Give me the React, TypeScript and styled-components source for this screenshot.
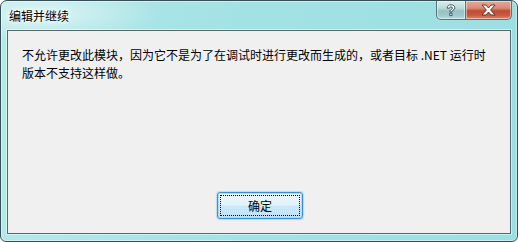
import React from 'react';
import styled, { createGlobalStyle } from 'styled-components';

const GlobalStyle = createGlobalStyle`
  html, body {
    margin: 0;
    padding: 0;
    background: #ffffff;
  }
  body {
    font-family: "Noto Sans CJK SC", "Microsoft YaHei", sans-serif;
  }
`;

const Window = styled.div`
  width: 518px;
  height: 242px;
  box-sizing: border-box;
  border: 1px solid #33505a;
  border-radius: 7px 7px 6px 6px;
  background:
    radial-gradient(ellipse 120px 30px at 40px 12px, rgba(255, 255, 255, 0.55), rgba(255, 255, 255, 0) 100%),
    linear-gradient(90deg, #b4e8e9 0%, #a3e2e4 45%, #9cdfe2 100%);
  box-shadow: inset 0 0 0 1px rgba(255, 255, 255, 0.45);
  display: flex;
  flex-direction: column;
  overflow: hidden;
`;

const TitleBar = styled.div`
  height: 29px;
  display: flex;
  justify-content: space-between;
  align-items: flex-start;
  flex-shrink: 0;
`;

const Title = styled.div`
  padding: 8px 0 0 8px;
  font-size: 12px;
  line-height: 14px;
  color: #000;
  text-shadow: 0 0 6px #ffffff, 0 0 4px #ffffff, 0 0 2px #ffffff;
`;

const CaptionButtons = styled.div`
  display: flex;
  margin-right: 5px;
`;

const CaptionButton = styled.div<{ $variant: 'help' | 'close' }>`
  width: ${({ $variant }) => ($variant === 'close' ? '46px' : '30px')};
  height: 19px;
  box-sizing: border-box;
  display: flex;
  align-items: center;
  justify-content: center;
  border: 1px solid #5a7478;
  border-top: none;
  border-left: ${({ $variant }) => ($variant === 'close' ? 'none' : '1px solid #5a7478')};
  border-radius: ${({ $variant }) => ($variant === 'close' ? '0 0 5px 0' : '0 0 0 5px')};
  background: ${({ $variant }) =>
    $variant === 'close'
      ? 'linear-gradient(180deg, #e3a99c 0%, #d98a78 40%, #c04a30 55%, #c85a42 80%, #dc8a70 100%)'
      : 'linear-gradient(180deg, #d8ecec 0%, #bcdada 40%, #97c2c3 55%, #9fcacb 80%, #b8dcdc 100%)'};
  box-shadow: inset 0 0 0 1px rgba(255, 255, 255, 0.45);
`;

const ClientArea = styled.div`
  flex: 1;
  margin: 0 6px 7px 6px;
  border: 1px solid #4f6b70;
  background: #f0f0f0;
  display: flex;
  flex-direction: column;
  box-shadow: 0 0 0 1px rgba(255, 255, 255, 0.5);
`;

const Message = styled.div`
  padding: 15px 0 0 14px;
  font-size: 12px;
  line-height: 18px;
  color: #000;
  white-space: nowrap;
`;

const Footer = styled.div`
  margin-top: auto;
  display: flex;
  justify-content: center;
  padding: 0 0 14px 2px;
`;

const Button = styled.button`
  width: 86px;
  height: 27px;
  box-sizing: border-box;
  padding: 0;
  border: 1px solid #3c8fd0;
  border-radius: 3px;
  background: linear-gradient(180deg, #ecf7fd 0%, #e2f2fc 48%, #cbe9fb 52%, #bde2f8 100%);
  box-shadow: inset 0 0 0 1px #a9dcf6, 0 0 1px 1px rgba(90, 180, 235, 0.35);
  font-family: "Noto Sans CJK SC", "Microsoft YaHei", sans-serif;
  font-size: 12px;
  color: #000;
  display: flex;
  align-items: stretch;
  justify-content: stretch;
`;

const FocusRect = styled.span`
  flex: 1;
  margin: 2px;
  border: 1px dotted #000;
  display: flex;
  align-items: center;
  justify-content: center;
  line-height: 14px;
`;

const HelpIcon = () => (
  <svg width="12" height="13" viewBox="0 0 12 13">
    <path
      d="M2.2 4.2 C2.2 1.6 4 0.8 6 0.8 C8.4 0.8 9.8 2 9.8 3.8 C9.8 5.4 8.6 6 7.6 6.6 C7 7 7 7.4 7 8 L4.8 8 C4.8 6.8 5.2 6.2 6.2 5.6 C7.2 5 7.4 4.6 7.4 4 C7.4 3.3 6.9 2.9 6 2.9 C5 2.9 4.6 3.4 4.6 4.2 Z M4.8 9.2 L7 9.2 L7 11.6 L4.8 11.6 Z"
      fill="#ffffff"
      stroke="#2f4e55"
      strokeWidth="0.9"
      strokeLinejoin="round"
    />
  </svg>
);

const CloseIcon = () => (
  <svg width="15" height="12" viewBox="0 0 15 12">
    <path
      d="M1 1 L5 1 L7.5 4 L10 1 L14 1 L9.6 6 L14 11 L10 11 L7.5 8 L5 11 L1 11 L5.4 6 Z"
      fill="#ffffff"
      stroke="#5a2a20"
      strokeWidth="0.9"
      strokeLinejoin="round"
    />
  </svg>
);

export default function App() {
  return (
    <>
      <GlobalStyle />
      <Window>
        <TitleBar>
          <Title>编辑并继续</Title>
          <CaptionButtons>
            <CaptionButton $variant="help">
              <HelpIcon />
            </CaptionButton>
            <CaptionButton $variant="close">
              <CloseIcon />
            </CaptionButton>
          </CaptionButtons>
        </TitleBar>
        <ClientArea>
          <Message>
            不允许更改此模块，因为它不是为了在调试时进行更改而生成的，或者目标 .NET 运行时
            <br />
            版本不支持这样做。
          </Message>
          <Footer>
            <Button>
              <FocusRect>确定</FocusRect>
            </Button>
          </Footer>
        </ClientArea>
      </Window>
    </>
  );
}
